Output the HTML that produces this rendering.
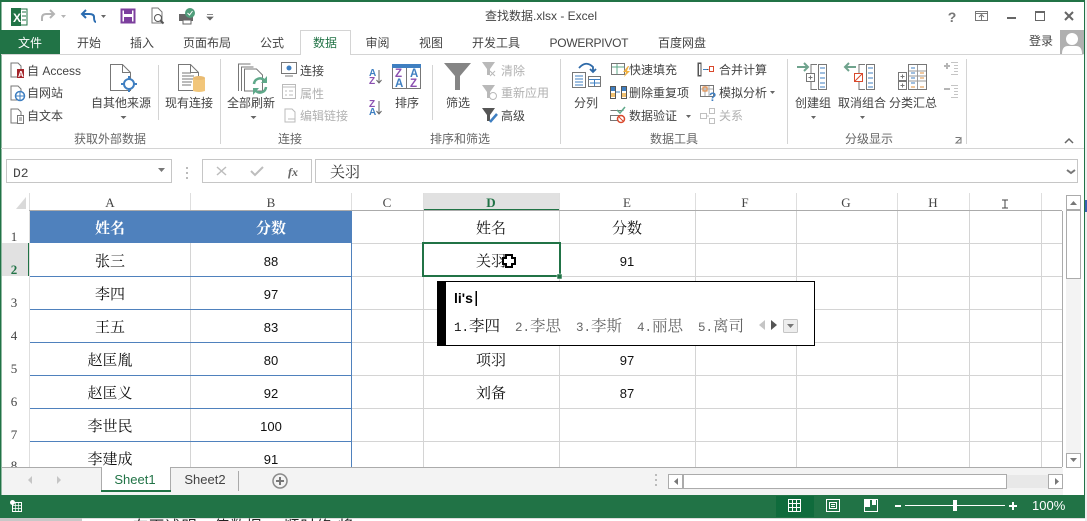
<!DOCTYPE html>
<html><head><meta charset="utf-8"><style>
html,body{margin:0;padding:0;background:#fff;overflow:hidden}
svg{display:block}
text{font-family:"Liberation Sans","Noto Sans CJK SC",sans-serif;font-size:12px;fill:#444}
.m{text-anchor:middle}
.d{fill:#b1b1b1}
.k{fill:#111;font-size:15px;font-family:"Liberation Serif","Noto Serif CJK SC",serif}
.w{fill:#fff;font-size:15px;font-weight:bold;font-family:"Liberation Serif","Noto Serif CJK SC",serif}
.n{fill:#111;font-size:13px}
.h{font-family:"Liberation Serif","Noto Serif CJK SC",serif;font-size:13px;fill:#444}
.i{fill:none;stroke:#777;stroke-width:1}
.c{font-size:15.500px;font-family:"Liberation Serif","Noto Serif CJK SC",serif;fill:#666}
.c tspan{font-family:"Liberation Mono",monospace;font-size:12.500px}
</style></head><body>
<svg width="1087" height="521" viewBox="0 0 1087 521" xmlns="http://www.w3.org/2000/svg">
<rect width="1087" height="521" fill="#fff"/>
<rect x="0" y="518" width="82" height="3" fill="#c8c8c8"/>
<rect x="82" y="518" width="1003" height="1" fill="#ddd"/>
<rect x="1085" y="0" width="2" height="521" fill="#eee"/>
<rect x="1085" y="200" width="2" height="12" fill="#3a5fb0"/>
<rect x="0" y="0" width="1085" height="2" fill="#217346"/>
<rect x="0" y="0" width="1.500" height="518" fill="#217346"/>
<rect x="1084" y="0" width="1" height="518" fill="#217346"/>

<!-- QAT -->
<rect x="12" y="9" width="15" height="16" fill="#fff" stroke="#217346"/>
<rect x="11" y="8" width="10" height="18" fill="#217346"/>
<text x="13" y="22" style="font-size:12px;font-weight:bold;fill:#fff">X</text>
<path d="M22 12h4M22 16h4M22 20h4" stroke="#217346"/>
<path d="M42 21v-3q0-4 4-4h8M50 10l4 4-4 4" fill="none" stroke="#b4b4b4" stroke-width="2"/>
<path d="M61 15h5l-2.500 3z" fill="#b4b4b4"/>
<path d="M96 22q-2 0-2-5 0-3-5-3h-7M86 10l-4 4 4 4" fill="none" stroke="#2b6cb0" stroke-width="2"/>
<path d="M101 15h5l-2.500 3z" fill="#666"/>
<rect x="121.500" y="9.500" width="13" height="13" fill="#fff" stroke="#7c3f9e" stroke-width="2"/>
<rect x="124" y="9" width="8" height="5" fill="#7c3f9e"/><rect x="124" y="17" width="8" height="6" fill="#7c3f9e"/>
<path d="M152 8h6l4 4v11h-10z" fill="#fff" stroke="#777"/><circle cx="158" cy="18" r="3.500" fill="#fff" stroke="#555"/><path d="M160.500 20.500l3 3" stroke="#555" stroke-width="2"/>
<rect x="179" y="14" width="14" height="7" fill="#666"/><rect x="183" y="20" width="8" height="4" fill="#fff" stroke="#666"/><circle cx="190" cy="13" r="5" fill="#4f9d7a"/><path d="M187.500 13l2 2 3-4" fill="none" stroke="#fff"/>
<path d="M207 14.500h6M207 17h6l-3 3z" fill="#666" stroke="#666" stroke-width=".7"/>

<text class="m" x="541" y="20">查找数据.xlsx - Excel</text>

<!-- window buttons -->
<text class="m" x="952" y="22" style="font-size:14px;font-weight:bold;fill:#777">?</text>
<rect x="975.500" y="11.500" width="12" height="9" class="i"/><path d="M975.500 13.500h12M981.500 20v-5M979 17l2.500-2.500 2.500 2.500" class="i"/>
<rect x="1007" y="17" width="9" height="2" fill="#666"/>
<rect x="1035.500" y="11.500" width="9" height="9" fill="none" stroke="#666"/><rect x="1035" y="11" width="10" height="2" fill="#666"/>
<path d="M1065 12l8 8M1073 12l-8 8" stroke="#666" stroke-width="2"/>

<!-- tabs -->
<rect x="1" y="30" width="59" height="25" fill="#217346"/>
<text class="m" x="30" y="47" style="fill:#fff">文件</text>
<text class="m" x="89" y="47">开始</text>
<text class="m" x="142" y="47">插入</text>
<text class="m" x="207" y="47">页面布局</text>
<text class="m" x="272" y="47">公式</text>
<path d="M1 54.500h299.500v-24h50v24h733" fill="#fff" stroke="#d4d4d4"/>
<text class="m" x="325" y="47" style="fill:#217346">数据</text>
<text class="m" x="377.500" y="47">审阅</text>
<text class="m" x="431" y="47">视图</text>
<text class="m" x="496" y="47">开发工具</text>
<text class="m" x="589" y="47" textLength="79">POWERPIVOT</text>
<text class="m" x="682" y="47">百度网盘</text>
<text class="m" x="1041" y="45">登录</text>
<rect x="1060" y="30" width="24" height="24" fill="#b0b0b0"/>
<circle cx="1072" cy="39" r="6" fill="#fff"/><path d="M1062 54q0-8 6-8h8q6 0 6 8z" fill="#fff"/>

<!-- ribbon separators -->
<g stroke="#d4d4d4">
<path d="M220.500 59v85M560.500 59v85M787.500 59v85M966.500 59v85M158.500 65v55M432.500 65v55"/>
<path d="M1 148.500h1083"/>
</g>

<!-- external data -->
<path d="M11 63h7l3 3v11h-10z" class="i"/><rect x="17" y="69" width="7" height="9" fill="#a4262c"/><text x="18" y="77" style="font-size:8px;font-weight:bold;fill:#fff">A</text>
<text x="27" y="75">自 Access</text>
<path d="M11 86h7l3 3v11h-10z" class="i"/><circle cx="20" cy="96" r="4.500" fill="#fff" stroke="#3f7fc1" stroke-width="1.500"/><path d="M15.500 96h9M20 91.500v9" stroke="#3f7fc1"/>
<text x="27" y="97">自网站</text>
<path d="M11 109h7l3 3v11h-10z" class="i"/><rect x="17.500" y="115.500" width="6" height="8" fill="#fff" stroke="#777"/><path d="M19 118h3M19 120h3" stroke="#777"/>
<text x="27" y="120">自文本</text>
<path d="M110.500 64.500h12l8 8v18h-20zM122.500 64.500v8h8" class="i"/>
<circle cx="129" cy="84" r="5" fill="#fff" stroke="#3f7fc1" stroke-width="2"/><path d="M129 76v4M129 88v4M121 84h4M133 84h4" stroke="#3f7fc1" stroke-width="2"/>
<text class="m" x="121" y="107">自其他来源</text>
<path d="M120.500 116h6l-3 3z" fill="#666"/>
<path d="M178.500 64.500h12l8 8v18h-20zM190.500 64.500v8h8M182 73h9M182 76h12M182 79h12M182 82h10M182 85h9" class="i"/>
<path d="M193 78h12v13q-6 2-12 0z" fill="#f2c67a"/><ellipse cx="199" cy="78" rx="6" ry="2" fill="#e9bb72"/>
<text class="m" x="189" y="107">现有连接</text>
<text class="m" x="110" y="143" style="fill:#666">获取外部数据</text>

<!-- connections -->
<path d="M238.500 91v-27h12M241.500 91v-24h12M244.500 91v-22h12l6 6v16h-18z" fill="#fff" stroke="#777"/>
<path d="M254 84a6 6 0 0 1 10-4M266 87a6 6 0 0 1-10 4" fill="none" stroke="#5fa98a" stroke-width="2.500"/><path d="M267 76v7h-6zM253 95v-7h6z" fill="#5fa98a"/>
<text class="m" x="251" y="107">全部刷新</text>
<path d="M250.500 116h6l-3 3z" fill="#666"/>
<rect x="281.500" y="62.500" width="15" height="11" fill="#fff" stroke="#777"/><path d="M285 76h8" stroke="#777"/><circle cx="289" cy="68" r="2.500" fill="#3f7fc1"/>
<text x="300" y="75">连接</text>
<rect x="282.500" y="84.500" width="13" height="14" fill="#fff" stroke="#bbb"/><path d="M283 87h12M285 91h2M289 91h4M285 95h2M289 95h4" stroke="#bbb"/>
<text class="d" x="300" y="98">属性</text>
<path d="M285 109h7l3 3v10h-10z" fill="none" stroke="#bbb"/><path d="M288 119h7M288 122h7" stroke="#bbb"/>
<text class="d" x="300" y="120">编辑链接</text>
<text class="m" x="290" y="143" style="fill:#666">连接</text>

<!-- sort -->
<text x="369" y="76" style="font-size:10px;font-weight:bold;fill:#3f7fc1">A</text><text x="369" y="84" style="font-size:10px;font-weight:bold;fill:#8a4fb0">Z</text><path d="M379 70v13M376.500 80l2.500 3 2.500-3" fill="none" stroke="#666"/>
<text x="369" y="107" style="font-size:10px;font-weight:bold;fill:#8a4fb0">Z</text><text x="369" y="115" style="font-size:10px;font-weight:bold;fill:#3f7fc1">A</text><path d="M379 101v13M376.500 111l2.500 3 2.500-3" fill="none" stroke="#666"/>
<rect x="392.500" y="64.500" width="28" height="24" fill="#fff" stroke="#777"/><rect x="392" y="64" width="29" height="4" fill="#3f7fc1"/><path d="M406.500 68v20" stroke="#777"/>
<text x="395" y="77" style="font-size:11.500px;font-weight:bold;fill:#8a4fb0">Z</text><text x="395" y="87" style="font-size:11.500px;font-weight:bold;fill:#3f7fc1">A</text><text x="410" y="77" style="font-size:11.500px;font-weight:bold;fill:#3f7fc1">A</text><text x="410" y="87" style="font-size:11.500px;font-weight:bold;fill:#8a4fb0">Z</text>
<text class="m" x="407" y="107">排序</text>
<path d="M444 63h27l-11 13v14h-5v-14z" fill="#858585"/>
<text class="m" x="458" y="107">筛选</text>
<path d="M482 62h13l-5 7v6h-3v-6z" fill="#b9b9b9"/><path d="M490 71l5 5M495 71l-5 5" stroke="#b9b9b9"/>
<text class="d" x="501" y="75">清除</text>
<path d="M482 85h13l-5 7v6h-3v-6z" fill="#b9b9b9"/><circle cx="493" cy="96" r="3.500" fill="#fff" stroke="#b9b9b9"/>
<text class="d" x="501" y="97">重新应用</text>
<path d="M482 108h13l-5 7v6h-3v-6z" fill="#555"/><path d="M490 122l7-8" stroke="#3f7fc1" stroke-width="2.500"/>
<text x="501" y="120">高级</text>
<text class="m" x="460" y="143" style="fill:#666">排序和筛选</text>

<!-- data tools -->
<path d="M572.500 72.500h13v15h-13z" class="i"/><path d="M575 76h8M575 79h8M575 82h8M575 85h8" stroke="#3f7fc1"/>
<rect x="588.500" y="76.500" width="12" height="10" fill="#fff" stroke="#777"/><path d="M589 79.500h11M594.500 80v6M590 83h10" stroke="#3f7fc1"/>
<path d="M579 68q7-8 14-1v4M590 69l3 3 3-3" fill="none" stroke="#2f6aa8" stroke-width="1.800"/>
<text class="m" x="586" y="107">分列</text>
<rect x="611.500" y="63.500" width="13" height="11" fill="#fff" stroke="#777"/><path d="M612 67h12M617 64v10" stroke="#5fa98a"/><path d="M628 66l-5 6h3l-2 5 6-6h-3l2-5z" fill="#f0b040"/>
<text x="629" y="74">快速填充</text>
<rect x="610.500" y="86.500" width="5" height="12" fill="#fff" stroke="#555"/><rect x="621.500" y="86.500" width="5" height="12" fill="#fff" stroke="#555"/><rect x="611" y="87" width="4" height="4" fill="#3f7fc1"/><rect x="611" y="93" width="4" height="4" fill="#f0c070"/><rect x="622" y="87" width="4" height="4" fill="#3f7fc1"/><rect x="622" y="93" width="4" height="4" fill="#f0c070"/><path d="M616 92h4" stroke="#3f7fc1"/>
<text x="629" y="97">删除重复项</text>
<path d="M610.500 110.500h13M610.500 115.500h9v5h-9z" class="i"/><path d="M617 110l3 3 5-6" fill="none" stroke="#5fa98a" stroke-width="1.500"/><circle cx="621" cy="119" r="3.500" fill="#fff" stroke="#d9482b" stroke-width="1.500"/><path d="M618.500 116.500l5 5" stroke="#d9482b"/>
<text x="629" y="120">数据验证</text>
<path d="M686 115h5l-2.500 3z" fill="#666"/>
<path d="M700.500 63.500h-2v12h2M704.500 69.500h4" fill="none" stroke="#555"/><rect x="698" y="63" width="3" height="13" fill="none" stroke="#555"/><path d="M703 69.500h4" stroke="#3f7fc1"/><rect x="709.500" y="66.500" width="4" height="5" fill="none" stroke="#d9482b"/>
<text x="719" y="74">合并计算</text>
<rect x="700.500" y="85.500" width="13" height="11" fill="#fff" stroke="#777"/><path d="M701 89h12M705 86v10M709 86v10" stroke="#aaa"/><rect x="703" y="87" width="4" height="4" fill="none" stroke="#e07b2d"/><text x="709" y="101" style="font-size:12px;font-weight:bold;fill:#3f7fc1">?</text>
<text x="719" y="97">模拟分析</text>
<path d="M770 91h5l-2.500 3z" fill="#666"/>
<path d="M700.500 113.500h6v5h-6zM709.500 108.500h5v5h-5zM709.500 118.500h5v5h-5zM706 116h3" fill="none" stroke="#c0c0c0"/>
<text class="d" x="719" y="120">关系</text>
<text class="m" x="674" y="143" style="fill:#666">数据工具</text>

<!-- outline -->
<path d="M797 67h11M804 63l4 4-4 4" fill="none" stroke="#6fa38d" stroke-width="2"/>
<path d="M817 64.500h-6v25h6" class="i"/><rect x="806.500" y="73.500" width="8" height="8" fill="#fff" stroke="#777"/><path d="M808.500 77.500h4M810.500 75.500v4" stroke="#777"/>
<rect x="818.500" y="64.500" width="8" height="25" fill="#fff" stroke="#777"/><path d="M820 68h5M820 73h5M820 78h5M820 83h5M820 87h5" stroke="#3f7fc1"/>
<text class="m" x="813" y="107">创建组</text><path d="M811 116h5l-2.500 3z" fill="#666"/>
<path d="M846 67h10M849 63l-4 4 4 4" fill="none" stroke="#6fa38d" stroke-width="2"/>
<path d="M865 64.500h-6v25h6" class="i"/><rect x="854.500" y="73.500" width="8" height="8" fill="#fff" stroke="#d9482b"/><path d="M855 81l7-7" stroke="#d9482b"/>
<rect x="866.500" y="64.500" width="8" height="25" fill="#fff" stroke="#777"/><path d="M868 68h5M868 73h5M868 78h5M868 83h5M868 87h5" stroke="#3f7fc1"/>
<text class="m" x="862" y="107">取消组合</text><path d="M860 116h5l-2.500 3z" fill="#666"/>
<rect x="898.500" y="72.500" width="8" height="8" fill="#fff" stroke="#777"/><path d="M900.500 76.500h4M902.500 74.500v4" stroke="#777"/>
<rect x="898.500" y="81.500" width="8" height="8" fill="#fff" stroke="#777"/><path d="M900.500 85.500h4M902.500 83.500v4" stroke="#777"/>
<rect x="908.500" y="64.500" width="18" height="25" fill="#fff" stroke="#777"/><path d="M909 71h17M909 76h17M909 81h17M917.500 65v24" stroke="#999"/>
<path d="M911 68h4M911 73h4M911 83h4M911 78h4" stroke="#3f7fc1"/><path d="M920 78h4M911 87h4M920 87h4M920 73h4" stroke="#e0923d"/>
<text class="m" x="913" y="107">分类汇总</text>
<text class="m" x="869" y="143" style="fill:#666">分级显示</text>
<path d="M944 66h6M947 63v6" stroke="#b5b5b5" stroke-width="2"/><path d="M951 62.500h7M954 65.500h4M954 68.500h4M954 71.500h4M951 74.500h7" stroke="#c5c5c5"/>
<path d="M944 89h6" stroke="#b5b5b5" stroke-width="2"/><path d="M951 85.500h7M954 88.500h4M954 91.500h4M954 94.500h4M951 97.500h7" stroke="#c5c5c5"/>
<path d="M956 143h5v-5zM955.500 137.500h5" fill="none" stroke="#777"/>
<path d="M1065 143l4-4 4 4" fill="none" stroke="#666" stroke-width="1.500"/>

<!-- formula bar -->
<rect x="6.500" y="159.500" width="165" height="23" fill="#fff" stroke="#c6c6c6"/>
<text x="13" y="177" style="font-family:'Liberation Mono',monospace;font-size:13px">D2</text>
<path d="M158 168h7l-3.500 4z" fill="#777"/>
<path d="M187 167v2M187 172v2M187 177v2" stroke="#bbb" stroke-width="2"/>
<rect x="202.500" y="159.500" width="109" height="23" fill="#fff" stroke="#c6c6c6"/>
<path d="M217 167l9 8M226 167l-9 8" stroke="#bdbdbd" stroke-width="1.500"/>
<path d="M251 171l4 4 8-8" fill="none" stroke="#bdbdbd" stroke-width="2"/>
<text class="m" x="293" y="176" style="font-family:'Liberation Serif',serif;font-style:italic;font-weight:bold;fill:#666">fx</text>
<rect x="315.500" y="159.500" width="762" height="23" fill="#fff" stroke="#c6c6c6"/>
<text x="330" y="177" style="font-size:15px;fill:#333;font-family:'Noto Serif CJK SC',serif">关羽</text>
<path d="M1067 170l4 3 4-3" fill="none" stroke="#777" stroke-width="2"/>

<!-- headers -->
<rect x="423" y="193" width="136" height="17" fill="#e1e1e1"/>
<rect x="423" y="209" width="136" height="2" fill="#217346"/>
<rect x="2" y="243" width="27" height="33" fill="#e1e1e1"/>
<rect x="28" y="243" width="2" height="33" fill="#217346"/>
<path d="M26 197v12h-10z" fill="#d9d9d9"/>
<g stroke="#dedede"><path d="M29.500 193v274M190.500 193v17M351.500 193v17M423.500 193v17M559.500 193v17M695.500 193v17M796.500 193v17M897.500 193v17M969.500 193v17M1041.500 193v17"/></g>
<path d="M29 210.500h1033" stroke="#ababab"/>
<text class="m h" x="110" y="207">A</text><text class="m h" x="271" y="207">B</text><text class="m h" x="387" y="207">C</text><text class="m h" x="491" y="207" style="fill:#217346;font-weight:bold">D</text><text class="m h" x="627" y="207">E</text><text class="m h" x="745" y="207">F</text><text class="m h" x="846" y="207">G</text><text class="m h" x="933" y="207">H</text>
<path d="M1002 200h6M1002 208h6M1005 200v8" stroke="#444"/>
<text class="m h" x="14" y="241">1</text><text class="m h" x="14" y="274" style="fill:#217346;font-weight:bold">2</text><text class="m h" x="14" y="307">3</text><text class="m h" x="14" y="340">4</text><text class="m h" x="14" y="373">5</text><text class="m h" x="14" y="406">6</text><text class="m h" x="14" y="439">7</text><text class="m h" x="14" y="470">8</text>

<!-- grid -->
<g stroke="#d4d4d4">
<path d="M351 243.500h711M351 276.500h711M351 309.500h711M351 342.500h711M351 375.500h711M351 408.500h711M351 441.500h711"/>
<path d="M190.500 243v224M423.500 211v256M559.500 211v256M695.500 211v256M796.500 211v256M897.500 211v256M969.500 211v256M1041.500 211v256"/>
</g>
<rect x="30" y="211" width="322" height="32" fill="#4f81bd"/>
<path d="M30 276.500h322M30 309.500h322M30 342.500h322M30 375.500h322M30 408.500h322M30 441.500h322M351.500 243v224" stroke="#4f81bd"/>
<path d="M29 467.500h1033M1062.500 211v256" stroke="#ababab"/>

<!-- table text -->
<text class="m w" x="110" y="233">姓名</text><text class="m w" x="271" y="233">分数</text>
<text class="m k" x="110" y="266">张三</text><text class="m n" x="271" y="266">88</text>
<text class="m k" x="110" y="299">李四</text><text class="m n" x="271" y="299">97</text>
<text class="m k" x="110" y="332">王五</text><text class="m n" x="271" y="332">83</text>
<text class="m k" x="110" y="365">赵匡胤</text><text class="m n" x="271" y="365">80</text>
<text class="m k" x="110" y="398">赵匡义</text><text class="m n" x="271" y="398">92</text>
<text class="m k" x="110" y="431">李世民</text><text class="m n" x="271" y="431">100</text>
<text class="m k" x="110" y="464">李建成</text><text class="m n" x="271" y="464">91</text>
<text class="m k" x="491" y="233">姓名</text><text class="m k" x="627" y="233">分数</text>
<text class="m k" x="491" y="266">关羽</text><text class="m n" x="627" y="266">91</text>
<text class="m k" x="491" y="365">项羽</text><text class="m n" x="627" y="365">97</text>
<text class="m k" x="491" y="398">刘备</text><text class="m n" x="627" y="398">87</text>

<!-- selection -->
<rect x="423" y="243" width="137" height="33" fill="none" stroke="#217346" stroke-width="2"/>
<rect x="557" y="274" width="5" height="5" fill="#217346" stroke="#fff" stroke-width=".5"/>
<path d="M506 255h6v3h3v6h-3v3h-6v-3h-3v-6h3z" fill="#fff" stroke="#000" stroke-width="2"/>

<!-- IME -->
<rect x="437.500" y="281.500" width="377" height="64" fill="#fff" stroke="#000"/>
<rect x="437" y="281" width="9" height="65" fill="#000"/>
<text x="454" y="303" style="font-size:14px;font-weight:bold;fill:#000">li's</text>
<rect x="475.500" y="291" width="1.500" height="15" fill="#000"/>
<text class="c" x="454" y="331" style="fill:#111"><tspan>1.</tspan>李四</text>
<text class="c" x="515" y="331"><tspan>2.</tspan>李思</text>
<text class="c" x="576" y="331"><tspan>3.</tspan>李斯</text>
<text class="c" x="637" y="331"><tspan>4.</tspan>丽思</text>
<text class="c" x="698" y="331"><tspan>5.</tspan>离司</text>
<path d="M765 320v10l-6-5z" fill="#c5c5c5"/><path d="M771 320v10l6-5z" fill="#555"/>
<rect x="783.500" y="319.500" width="14" height="13" rx="1" fill="#eee" stroke="#c5c5c5"/><path d="M787 324h7l-3.500 4z" fill="#777"/>

<!-- v scrollbar -->
<rect x="1066" y="279" width="15" height="175" fill="#f3f3f3"/>
<rect x="1066.500" y="195.500" width="14" height="14" fill="#fff" stroke="#ababab"/><path d="M1070 205h7l-3.500-4z" fill="#777"/>
<rect x="1066.500" y="210.500" width="14" height="68" fill="#fff" stroke="#ababab"/>
<rect x="1066.500" y="453.500" width="14" height="14" fill="#fff" stroke="#ababab"/><path d="M1070 458h7l-3.500 4z" fill="#777"/>

<!-- tab bar -->
<rect x="2" y="468" width="1061" height="27" fill="#f3f3f3"/>
<path d="M2 467.500h99" stroke="#ababab"/><path d="M171 467.500h891" stroke="#ababab"/>
<rect x="101" y="467" width="70" height="25" fill="#fff"/>
<path d="M101.500 491v-24M170.500 491v-24" stroke="#ababab"/>
<rect x="101" y="490" width="70" height="2" fill="#217346"/>
<text class="m" x="135" y="484" style="fill:#217346;font-size:13px">Sheet1</text>
<text class="m" x="205" y="484" style="font-size:13px">Sheet2</text>
<path d="M238.500 471v20" stroke="#aaa"/>
<path d="M32 476v8l-4-4z" fill="#c5c5c5"/><path d="M57 476v8l4-4z" fill="#c5c5c5"/>
<circle cx="280" cy="481" r="7" fill="none" stroke="#8a8a8a" stroke-width="1.500"/><path d="M276 481h8M280 477v8" stroke="#777" stroke-width="2"/>
<path d="M656 474v2M656 479v2M656 484v2" stroke="#bbb" stroke-width="2"/>
<rect x="668.500" y="474.500" width="14" height="14" fill="#fff" stroke="#ababab"/><path d="M678 478v7l-4-3.500z" fill="#777"/>
<rect x="683.500" y="474.500" width="323" height="14" fill="#fff" stroke="#ababab"/>
<rect x="1007" y="475" width="41" height="13" fill="#e8e8e8"/>
<rect x="1048.500" y="474.500" width="14" height="14" fill="#fff" stroke="#ababab"/><path d="M1055 478v7l4-3.500z" fill="#777"/>

<!-- status bar -->
<rect x="1" y="495" width="1084" height="23" fill="#217346"/>
<rect x="776" y="496" width="38" height="21" fill="#0f6b3c"/>
<path d="M788.500 499.500h12v12h-12zM788.500 503.500h12M788.500 507.500h12M792.500 499.500v12M796.500 499.500v12" fill="none" stroke="#fff"/>
<path d="M826.500 499.500h13v12h-13zM829.500 502.500h7v6h-7zM831 504.500h4M831 506.500h4" fill="none" stroke="#fff"/>
<path d="M864.500 499.500h13v12h-13z" fill="none" stroke="#fff"/><path d="M865 500h5v7h-5zM872 500h4v5h-4z" fill="#fff"/>
<rect x="895" y="505" width="6" height="2" fill="#fff"/>
<rect x="905" y="505" width="100" height="1" fill="#fff"/>
<rect x="953" y="500" width="4" height="11" fill="#fff"/>
<path d="M1009 506h8M1013 502v8" stroke="#fff" stroke-width="2"/>
<text x="1032" y="510" style="fill:#fff;font-size:13px">100%</text>
<rect x="12.500" y="502.500" width="9" height="9" fill="none" stroke="#fff"/><path d="M12 505.500h9M12 508.500h9M15.500 503v8M18.500 503v8" stroke="#fff" stroke-width=".7"/><circle cx="12.500" cy="502.500" r="2.500" fill="#fff"/>
<text x="133" y="531" textLength="220" style="font-size:15px;fill:#222">在下述明&amp; 使数据-IF顺时修 将</text>
</svg>
</body></html>
